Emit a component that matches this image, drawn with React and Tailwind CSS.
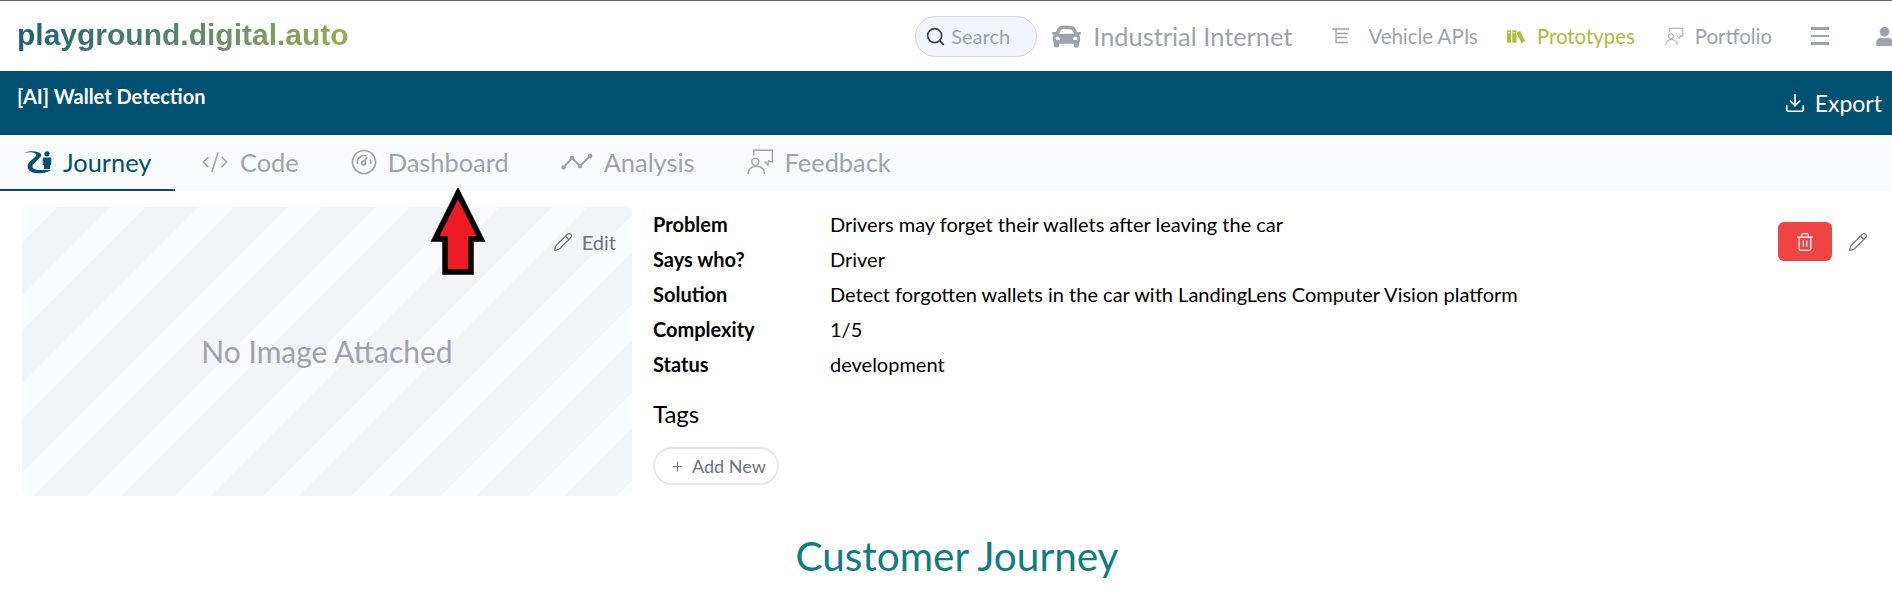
import { Search, Download, Plus, Pencil, Trash2, CodeXml } from "lucide-react";
import { FaCar, FaUser } from "react-icons/fa";
import { ImBooks } from "react-icons/im";

function ApiIcon({ className }) {
  return (
    <svg viewBox="0 0 20 20" fill="none" stroke="currentColor" strokeWidth="1.3" className={className}>
      <path d="M1 3h17M5 3v14M5 7.500h12M5 11.500h11M5 16.500h12" />
    </svg>
  );
}

// person in front of a board, used by Feedback and Portfolio
function PortfolioIcon({ className }) {
  return (
    <svg viewBox="6 8 29 28" fill="none" stroke="currentColor" strokeWidth="1.500" className={className}>
      <circle cx="15" cy="21.700" r="3.800" />
      <path d="M7.300 35c0-5 3-8.300 8.700-8.300s8.700 3.300 8.700 8.300M13.300 15V9.300h20v12.400H30M25 21.700l3.300 3.300 1.200-5" />
    </svg>
  );
}

function JourneyIcon({ className }) {
  return (
    <svg viewBox="0 0 28 23" className={className} fill="currentColor">
      <path d="M0 2C5-.5 14-.5 17 3c1 2-1 3-2 4.500l-6 6c-2 3.500 1 5.500 8 5.500h10c-3 3-13 4-18 2.500-6-2-7-7-3-11 3-3 7-5 6-7.500C10.500 1 4 1 0 2z" />
      <circle cx="23" cy="2.800" r="2.600" />
      <path d="M20 6.500h6c.800 0 1.300.5 1.300 1.300V14h-1.300v4h-6v-4h-1.300V7.800c0-.8.500-1.300 1.300-1.300z" />
    </svg>
  );
}

function GaugeIcon({ className }) {
  return (
    <svg viewBox="0 0 26 26" fill="none" stroke="currentColor" strokeWidth="1.700" className={className}>
      <circle cx="13" cy="13" r="11.500" />
      <path d="M6.500 15a6.800 6.800 0 0 1 9-8M19.300 10.500a6.800 6.800 0 0 1 .3 4.500" />
      <circle cx="12.500" cy="14" r="2" />
      <path d="M13.500 12.500l2.500-4.500" />
    </svg>
  );
}

function AnalysisIcon({ className }) {
  return (
    <svg viewBox="0 0 32 18" fill="none" stroke="currentColor" strokeWidth="1.900" className={className}>
      <path d="M2.500 14.500L11 5l8 8L29 3" />
      <g fill="currentColor" stroke="none">
        <circle cx="2.500" cy="14.500" r="2.300" />
        <circle cx="11" cy="5" r="2.300" />
        <circle cx="19" cy="13" r="2.300" />
        <circle cx="29" cy="3" r="2.300" />
      </g>
    </svg>
  );
}

function RedArrow() {
  return (
    <svg viewBox="0 0 56 88" className="absolute left-[430px] top-[188px] w-[56px] h-[88px]">
      <path d="M28 5L51 51H41V84H15V51H5z" fill="#ed1c24" stroke="#000" strokeWidth="5.500" strokeLinejoin="miter" />
    </svg>
  );
}

const tabs = [
  { label: "Journey", icon: JourneyIcon, size: "w-[28px] h-[23px]", active: true },
  { label: "Code", icon: CodeXml, size: "w-[28px] h-[28px] stroke-[1.3]" },
  { label: "Dashboard", icon: GaugeIcon, size: "w-[26px] h-[26px]" },
  { label: "Analysis", icon: AnalysisIcon, size: "w-[32px] h-[18px]" },
  { label: "Feedback", icon: PortfolioIcon, size: "w-[27px] h-[26px]" },
];

const details = [
  ["Problem", "Drivers may forget their wallets after leaving the car"],
  ["Says who?", "Driver"],
  ["Solution", "Detect forgotten wallets in the car with LandingLens Computer Vision platform"],
  ["Complexity", "1/5"],
  ["Status", "development"],
];

export default function App() {
  return (
    <div className="relative h-[602px] overflow-hidden bg-white font-['Lato',sans-serif] text-black">
      <header className="flex h-[71px] items-center border-t border-[#666] pl-[17px]">
        <span className="mt-[-3px] bg-gradient-to-r from-[#1d5f78] to-[#97ad50] bg-clip-text font-['Liberation_Sans',sans-serif] text-[30px] font-bold text-transparent">
          playground.digital.auto
        </span>
        <div className="ml-auto mr-[-2px] flex shrink-0 items-center text-[20.4px] text-[#9ca3af]">
          <div className="flex h-[41px] w-[122px] items-center gap-[5px] rounded-full border border-[#d1d5db] bg-[#f1f5f9] pl-[9px] text-[20px] text-[#94a3b8]">
            <Search className="h-[21px] w-[21px] text-[#374151]" strokeWidth={1.8} />
            Search
          </div>
          <FaCar className="ml-[15px] h-[29px] w-[29px]" />
          <span className="ml-[12px] text-[25.4px]">Industrial Internet</span>
          <ApiIcon className="ml-[39px] h-[20px] w-[20px]" />
          <span className="ml-[17px]">Vehicle APIs</span>
          <ImBooks className="ml-[29px] h-[19px] w-[19px] text-[#aebd38]" />
          <span className="ml-[11px] text-[#aebd38]">Prototypes</span>
          <PortfolioIcon className="ml-[30px] h-[19px] w-[19px]" />
          <span className="ml-[11px]">Portfolio</span>
          <div className="ml-[39px] flex w-[18px] flex-col gap-[5px]">
            <div className="h-[2.500px] bg-[#9ca3af]" />
            <div className="h-[2.500px] bg-[#9ca3af]" />
            <div className="h-[2.500px] bg-[#9ca3af]" />
          </div>
          <FaUser className="ml-[46px] h-[19px] w-[19px] shrink-0" />
        </div>
      </header>

      <div className="flex h-[64px] items-start justify-between bg-[#005072] pl-[17px] pr-[10px] text-white">
        <span className="mt-[10px] text-[20px] font-bold leading-[30px]">[AI] Wallet Detection</span>
        <div className="mt-[17px] flex items-center gap-[9px] text-[23px] leading-[30px]">
          <Download className="h-[22px] w-[22px]" strokeWidth={1.8} />
          Export
        </div>
      </div>

      <nav className="flex h-[56px] bg-[#f8fafc] text-[25.4px] text-[#9ca3af]">
        {tabs.map((t) => (
          <div
            key={t.label}
            className={
              t.active
                ? "flex w-[175px] items-center gap-[11px] border-b-2 border-[#005072] pl-[24px] text-[#005072]"
                : "flex items-center gap-[11px] border-b-2 border-transparent pl-[26px] pr-[26px]"
            }
          >
            <t.icon className={t.size} />
            {t.label}
          </div>
        ))}
      </nav>

      <main className="flex items-start pl-[22px] pr-[24px] pt-[16px]">
        <div className="relative flex h-[289px] w-[610px] shrink-0 items-center justify-center rounded-[4px] bg-[repeating-linear-gradient(135deg,#f9fafb_0px,#f9fafb_25px,#f3f4f6_25px,#f3f4f6_62.500px)] text-[30px] text-[#9ca3af]">
          No Image Attached
          <div className="absolute right-[16px] top-[20px] flex items-center gap-[9px] text-[20px] text-[#6b7280]">
            <Pencil className="h-[20px] w-[20px]" strokeWidth={1.5} />
            Edit
          </div>
        </div>

        <div className="ml-[21px] grow text-[20px]">
          <div className="grid grid-cols-[177px_1fr] leading-[35px]">
            {details.map(([k, v]) => (
              <div key={k} className="contents">
                <span className="font-bold">{k}</span>
                <span>{v}</span>
              </div>
            ))}
          </div>
          <div className="mt-[16px] text-[24px] leading-[32px]">Tags</div>
          <div className="mt-[17px] flex h-[38px] w-[126px] items-center gap-[7px] rounded-full border-2 border-[#e5e7eb] pl-[15px] text-[18px] text-[#6b7280]">
            <Plus className="h-[15px] w-[15px]" strokeWidth={1.8} />
            Add New
          </div>
        </div>

        <div className="mt-[15px] flex shrink-0 items-center gap-[16px]">
          <div className="flex h-[39px] w-[54px] items-center justify-center rounded-[6px] bg-[#ef4444] text-white">
            <Trash2 className="h-[20px] w-[20px]" strokeWidth={1.5} />
          </div>
          <Pencil className="h-[20px] w-[20px] text-[#6b7280]" strokeWidth={1.5} />
        </div>
      </main>

      <h1 className="mt-[35px] pl-[22px] text-center text-[40.500px] leading-[50px] text-[#0f7c80]">Customer Journey</h1>

      <RedArrow />
    </div>
  );
}
